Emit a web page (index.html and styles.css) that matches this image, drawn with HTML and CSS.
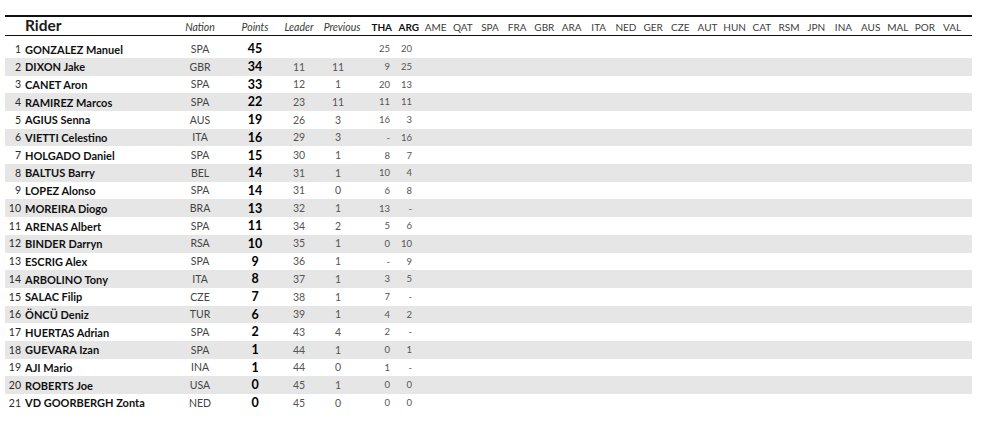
FILE: index.html
```html
<!DOCTYPE html>
<html>
<head>
<meta charset="utf-8">
<link rel="stylesheet" href="styles.css">
</head>
<body>
<div class="sheet">
<table class="standings">
<colgroup>
<col class="c-pos"><col class="c-name"><col class="c-nat"><col class="c-pts"><col class="c-lead"><col class="c-prev"><col class="c-tha"><col class="c-arg">
<col class="c-race"><col class="c-race"><col class="c-race"><col class="c-race"><col class="c-race"><col class="c-race"><col class="c-race"><col class="c-race"><col class="c-race"><col class="c-race"><col class="c-race"><col class="c-race"><col class="c-race"><col class="c-race"><col class="c-race"><col class="c-race"><col class="c-race"><col class="c-race"><col class="c-race"><col class="c-race">
<col class="c-fill">
</colgroup>
<thead>
<tr>
<th></th><th class="h-rider">Rider</th><th class="h-it">Nation</th><th class="h-it">Points</th><th class="h-it">Leader</th><th class="h-it h-prev">Previous</th><th class="h-done h-tha">THA</th><th class="h-done h-arg">ARG</th>
<th class="h-race">AME</th><th class="h-race">QAT</th><th class="h-race">SPA</th><th class="h-race">FRA</th><th class="h-race">GBR</th><th class="h-race">ARA</th><th class="h-race">ITA</th><th class="h-race">NED</th><th class="h-race">GER</th><th class="h-race">CZE</th><th class="h-race">AUT</th><th class="h-race">HUN</th><th class="h-race">CAT</th><th class="h-race">RSM</th><th class="h-race">JPN</th><th class="h-race">INA</th><th class="h-race">AUS</th><th class="h-race">MAL</th><th class="h-race">POR</th><th class="h-race">VAL</th><th></th>
</tr>
</thead>
<tbody>
<tr class="spacer"><td colspan="29"></td></tr>
<tr><td class="pos">1</td><td class="name">GONZALEZ Manuel</td><td class="nat">SPA</td><td class="pts">45</td><td class="lead"></td><td class="prev"></td><td class="tha">25</td><td class="arg">20</td><td colspan="21"></td></tr>
<tr><td class="pos">2</td><td class="name">DIXON Jake</td><td class="nat">GBR</td><td class="pts">34</td><td class="lead">11</td><td class="prev">11</td><td class="tha">9</td><td class="arg">25</td><td colspan="21"></td></tr>
<tr><td class="pos">3</td><td class="name">CANET Aron</td><td class="nat">SPA</td><td class="pts">33</td><td class="lead">12</td><td class="prev">1</td><td class="tha">20</td><td class="arg">13</td><td colspan="21"></td></tr>
<tr><td class="pos">4</td><td class="name">RAMIREZ Marcos</td><td class="nat">SPA</td><td class="pts">22</td><td class="lead">23</td><td class="prev">11</td><td class="tha">11</td><td class="arg">11</td><td colspan="21"></td></tr>
<tr><td class="pos">5</td><td class="name">AGIUS Senna</td><td class="nat">AUS</td><td class="pts">19</td><td class="lead">26</td><td class="prev">3</td><td class="tha">16</td><td class="arg">3</td><td colspan="21"></td></tr>
<tr><td class="pos">6</td><td class="name">VIETTI Celestino</td><td class="nat">ITA</td><td class="pts">16</td><td class="lead">29</td><td class="prev">3</td><td class="tha">-</td><td class="arg">16</td><td colspan="21"></td></tr>
<tr><td class="pos">7</td><td class="name">HOLGADO Daniel</td><td class="nat">SPA</td><td class="pts">15</td><td class="lead">30</td><td class="prev">1</td><td class="tha">8</td><td class="arg">7</td><td colspan="21"></td></tr>
<tr><td class="pos">8</td><td class="name">BALTUS Barry</td><td class="nat">BEL</td><td class="pts">14</td><td class="lead">31</td><td class="prev">1</td><td class="tha">10</td><td class="arg">4</td><td colspan="21"></td></tr>
<tr><td class="pos">9</td><td class="name">LOPEZ Alonso</td><td class="nat">SPA</td><td class="pts">14</td><td class="lead">31</td><td class="prev">0</td><td class="tha">6</td><td class="arg">8</td><td colspan="21"></td></tr>
<tr><td class="pos">10</td><td class="name">MOREIRA Diogo</td><td class="nat">BRA</td><td class="pts">13</td><td class="lead">32</td><td class="prev">1</td><td class="tha">13</td><td class="arg">-</td><td colspan="21"></td></tr>
<tr><td class="pos">11</td><td class="name">ARENAS Albert</td><td class="nat">SPA</td><td class="pts">11</td><td class="lead">34</td><td class="prev">2</td><td class="tha">5</td><td class="arg">6</td><td colspan="21"></td></tr>
<tr><td class="pos">12</td><td class="name">BINDER Darryn</td><td class="nat">RSA</td><td class="pts">10</td><td class="lead">35</td><td class="prev">1</td><td class="tha">0</td><td class="arg">10</td><td colspan="21"></td></tr>
<tr><td class="pos">13</td><td class="name">ESCRIG Alex</td><td class="nat">SPA</td><td class="pts">9</td><td class="lead">36</td><td class="prev">1</td><td class="tha">-</td><td class="arg">9</td><td colspan="21"></td></tr>
<tr><td class="pos">14</td><td class="name">ARBOLINO Tony</td><td class="nat">ITA</td><td class="pts">8</td><td class="lead">37</td><td class="prev">1</td><td class="tha">3</td><td class="arg">5</td><td colspan="21"></td></tr>
<tr><td class="pos">15</td><td class="name">SALAC Filip</td><td class="nat">CZE</td><td class="pts">7</td><td class="lead">38</td><td class="prev">1</td><td class="tha">7</td><td class="arg">-</td><td colspan="21"></td></tr>
<tr><td class="pos">16</td><td class="name">ÖNCÜ Deniz</td><td class="nat">TUR</td><td class="pts">6</td><td class="lead">39</td><td class="prev">1</td><td class="tha">4</td><td class="arg">2</td><td colspan="21"></td></tr>
<tr><td class="pos">17</td><td class="name">HUERTAS Adrian</td><td class="nat">SPA</td><td class="pts">2</td><td class="lead">43</td><td class="prev">4</td><td class="tha">2</td><td class="arg">-</td><td colspan="21"></td></tr>
<tr><td class="pos">18</td><td class="name">GUEVARA Izan</td><td class="nat">SPA</td><td class="pts">1</td><td class="lead">44</td><td class="prev">1</td><td class="tha">0</td><td class="arg">1</td><td colspan="21"></td></tr>
<tr><td class="pos">19</td><td class="name">AJI Mario</td><td class="nat">INA</td><td class="pts">1</td><td class="lead">44</td><td class="prev">0</td><td class="tha">1</td><td class="arg">-</td><td colspan="21"></td></tr>
<tr><td class="pos">20</td><td class="name">ROBERTS Joe</td><td class="nat">USA</td><td class="pts">0</td><td class="lead">45</td><td class="prev">1</td><td class="tha">0</td><td class="arg">0</td><td colspan="21"></td></tr>
<tr><td class="pos">21</td><td class="name">VD GOORBERGH Zonta</td><td class="nat">NED</td><td class="pts">0</td><td class="lead">45</td><td class="prev">0</td><td class="tha">0</td><td class="arg">0</td><td colspan="21"></td></tr>
</tbody>
</table>
</div>
</body>
</html>
```

FILE: styles.css
```css
html, body {
  margin: 0;
  padding: 0;
  background: #ffffff;
}

.sheet {
  padding: 15px 0 0 5px;
  font-family: "Lato", "Open Sans", sans-serif;
  color: #1a1a1a;
}

.standings {
  width: 967px;
  table-layout: fixed;
  border-collapse: collapse;
  border-spacing: 0;
}

.c-pos { width: 20px; }
.c-name { width: 145px; }
.c-nat { width: 60px; }
.c-pts { width: 50px; }
.c-lead { width: 38px; }
.c-prev { width: 44px; }
.c-tha { width: 32px; }
.c-arg { width: 28px; }
.c-race { width: 27.2px; }
.c-fill { width: 6px; }

.standings thead tr {
  height: 19px;
  border-top: 2px solid #111;
  border-bottom: 1.5px solid #111;
}

.standings th {
  padding: 0;
  font-weight: normal;
  white-space: nowrap;
  overflow: visible;
  vertical-align: middle;
  line-height: 1;
}

.standings th.h-rider {
  text-align: left;
  font-weight: 700;
  font-size: 15.5px;
  padding-bottom: 1px;
}

.standings th.h-it {
  font-style: italic;
  font-size: 10.5px;
  color: #3a3a3a;
  text-align: center;
  padding-top: 3px;
}

.standings th.h-prev {
  padding-left: 4px;
}

.standings th.h-done {
  font-size: 10px;
  font-weight: 700;
  color: #111;
  text-align: right;
  padding-top: 3px;
}

.standings th.h-tha { padding-right: 2px; }
.standings th.h-arg { padding-right: 3px; }

.standings th.h-race {
  font-size: 10px;
  color: #3c3c3c;
  text-align: center;
  padding-top: 3px;
}

.standings tbody tr {
  height: 17.7px;
}

.standings tbody tr.spacer {
  height: 4.8px;
}

.standings tbody tr.spacer td {
  padding: 0;
  font-size: 0;
  line-height: 0;
  height: 4.8px;
}

.standings tbody tr:nth-child(odd):not(.spacer) {
  background: #e6e6e6;
}

.standings td {
  padding: 0;
  white-space: nowrap;
  vertical-align: middle;
  line-height: 1;
  font-size: 10.5px;
}

.standings td.pos {
  text-align: right;
  padding-right: 4px;
  color: #2a2a2a;
}

.standings td.name {
  font-weight: 700;
  font-size: 11px;
  color: #111;
}

.standings td.nat {
  text-align: center;
  color: #444;
}

.standings td.pts {
  text-align: center;
  font-weight: 700;
  font-size: 12.5px;
  padding-top: 1px;
  color: #000;
}

.standings td.lead {
  text-align: center;
  color: #555;
}

.standings td.prev {
  text-align: center;
  padding-right: 4px;
  color: #555;
}

.standings td.tha {
  text-align: right;
  padding-right: 4px;
  font-size: 9.5px;
  color: #555;
}

.standings td.arg {
  text-align: right;
  padding-right: 10px;
  font-size: 9.5px;
  color: #555;
}
```
